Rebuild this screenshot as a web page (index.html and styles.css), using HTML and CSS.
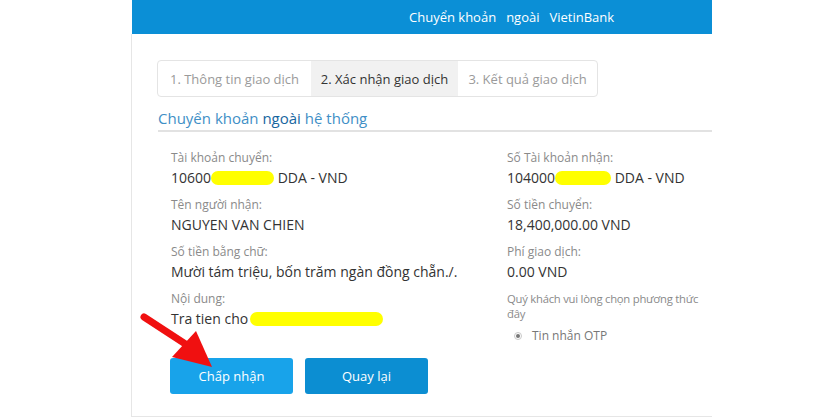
FILE: index.html
```html
<!DOCTYPE html>
<html lang="vi">
<head>
<meta charset="utf-8">
<title>Chuyển khoản ngoài VietinBank</title>
<link rel="stylesheet" href="styles.css">
</head>
<body>
<div class="page">
  <div class="header">
    <span class="h-word">Chuyển khoản</span>
    <span class="h-word">ngoài</span>
    <span class="h-word">VietinBank</span>
  </div>
  <div class="card">
    <div class="tabs">
      <div class="tab t1">1. Thông tin giao dịch</div>
      <div class="tab t2 active">2. Xác nhận giao dịch</div>
      <div class="tab t3">3. Kết quả giao dịch</div>
    </div>
    <div class="title">Chuyển khoản <span class="title-strong">ngoài</span> hệ thống</div>
    <div class="info">
      <div class="col col-left">
        <div class="field">
          <div class="label">Tài khoản chuyển:</div>
          <div class="value">10600<span class="mask m1"></span> DDA - VND</div>
        </div>
        <div class="field">
          <div class="label">Tên người nhận:</div>
          <div class="value">NGUYEN VAN CHIEN</div>
        </div>
        <div class="field">
          <div class="label">Số tiền bằng chữ:</div>
          <div class="value">Mười tám triệu, bốn trăm ngàn đồng chẵn./.</div>
        </div>
        <div class="field">
          <div class="label">Nội dung:</div>
          <div class="value">Tra tien cho<span class="mask m3"></span></div>
        </div>
      </div>
      <div class="col col-right">
        <div class="field">
          <div class="label">Số Tài khoản nhận:</div>
          <div class="value">104000<span class="mask m2"></span> DDA - VND</div>
        </div>
        <div class="field">
          <div class="label">Số tiền chuyển:</div>
          <div class="value">18,400,000.00 VND</div>
        </div>
        <div class="field">
          <div class="label">Phí giao dịch:</div>
          <div class="value">0.00 VND</div>
        </div>
        <div class="field">
          <div class="label multi">Quý khách vui lòng chọn phương thức<br>đây</div>
          <div class="radio-row"><span class="radio"><span class="dot"></span></span><span class="radio-text">Tin nhắn OTP</span></div>
        </div>
      </div>
    </div>
    <div class="buttons">
      <button class="btn btn-accept">Chấp nhận</button>
      <button class="btn btn-back">Quay lại</button>
    </div>
  </div>
  <svg class="arrow" width="90" height="70" viewBox="0 0 90 70">
    <line x1="8" y1="12" x2="54" y2="42" stroke="#f01010" stroke-width="7" stroke-linecap="round"/>
    <polygon points="76,62 36,52 60,26" fill="#f01010"/>
  </svg>
</div>
</body>
</html>
```
FILE: styles.css
```css
html, body {
  margin: 0;
  padding: 0;
  background: #ffffff;
}
body {
  font-family: "Open Sans", "Noto Sans", sans-serif;
  color: #333;
}
.page {
  position: relative;
  width: 840px;
  height: 420px;
  overflow: hidden;
}
.header {
  margin-left: 132px;
  width: 580px;
  height: 34px;
  background: #0b8fd6;
  display: flex;
  align-items: center;
  padding-left: 277px;
  box-sizing: border-box;
  color: #fff;
  font-size: 13px;
}
.h-word { margin-right: 10px; }
.card {
  margin-left: 131px;
  width: 581px;
  height: 383px;
  box-sizing: border-box;
  border-left: 1px solid #e6e6e6;
  border-bottom: 1px solid #e6e6e6;
  padding-top: 26px;
  padding-left: 25px;
}
.tabs {
  display: flex;
  width: 441px;
  height: 37px;
  box-sizing: border-box;
  border: 1px solid #e4e4e4;
  border-radius: 4px;
  overflow: hidden;
}
.tab {
  display: flex;
  align-items: center;
  justify-content: center;
  font-size: 13px;
  color: #9a9a9a;
  white-space: nowrap;
}
.t1 { width: 153px; }
.t2 { width: 147px; }
.t3 { flex: 1; }
.tab.active {
  background: #f1f1f1;
  color: #333;
}
.title {
  margin-top: 10px;
  margin-left: 1px;
  font-size: 15px;
  line-height: 22px;
  color: #3f8fc6;
  padding-bottom: 1px;
  border-bottom: 2px solid #e2e2e2;
}
.title-strong { color: #17669f; }
.info {
  display: flex;
  align-items: flex-start;
  padding-left: 14px;
  padding-top: 17px;
}
.col-left { width: 336px; }
.col-right { flex: 1; }
.field { margin-bottom: 7px; }
.label {
  font-size: 12px;
  line-height: 18px;
  color: #8a8a8a;
  white-space: nowrap;
}
.label.multi {
  font-size: 11.3px;
  line-height: 15px;
  padding-top: 1px;
  letter-spacing: -0.25px;
}
.value {
  font-size: 14px;
  line-height: 22px;
  color: #333;
  white-space: nowrap;
}
.mask {
  display: inline-block;
  height: 14px;
  background: #ffff00;
  border-radius: 7px;
  vertical-align: -2px;
}
.m1 { width: 63px; }
.m2 { width: 56px; }
.m3 { width: 133px; margin-left: 2px; }
.radio-row {
  display: flex;
  align-items: center;
  margin-top: 6px;
  margin-left: 7px;
}
.radio {
  width: 8px;
  height: 8px;
  border: 1px solid #c8c8c8;
  border-radius: 50%;
  display: flex;
  align-items: center;
  justify-content: center;
  box-sizing: border-box;
}
.dot {
  width: 4px;
  height: 4px;
  background: #777;
  border-radius: 50%;
}
.radio-text {
  margin-left: 10px;
  font-size: 12px;
  color: #777;
}
.buttons {
  display: flex;
  gap: 12px;
  margin-left: 13px;
  margin-top: 7px;
}
.btn {
  width: 123px;
  height: 36px;
  border: none;
  border-radius: 3px;
  color: #fff;
  font-family: "Open Sans", "Noto Sans", sans-serif;
  font-size: 13px;
}
.btn-accept { background: #18a3ea; }
.btn-back { background: #0c8ed2; }
.arrow {
  position: absolute;
  left: 136px;
  top: 305px;
}
```
